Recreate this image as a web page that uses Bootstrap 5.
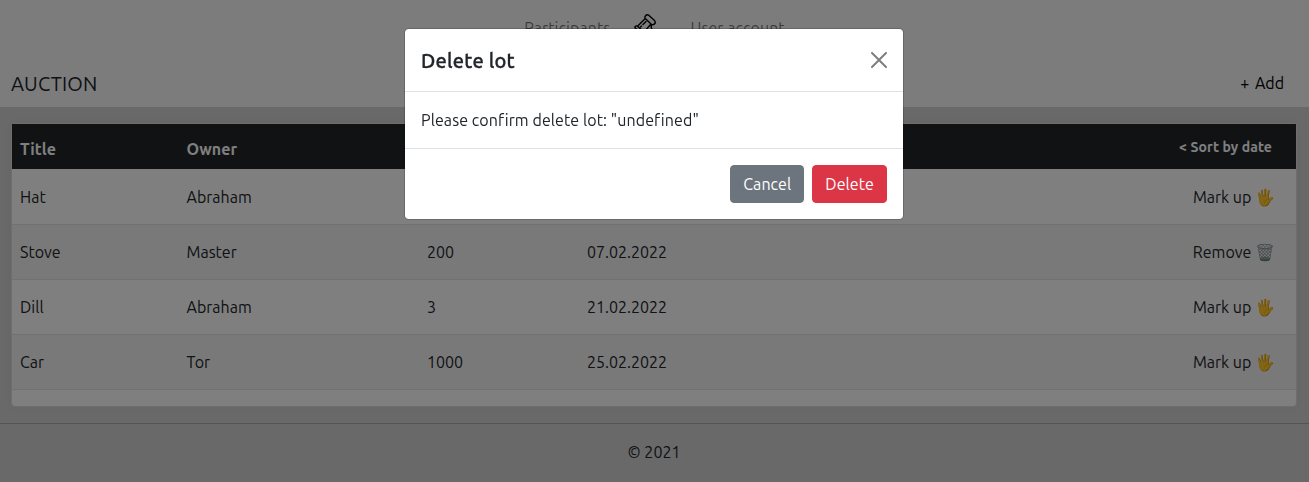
<!DOCTYPE html>
<html lang="en">
<head>
<meta charset="utf-8">
<meta name="viewport" content="width=device-width, initial-scale=1">
<title>Auction</title>
<link href="https://cdn.jsdelivr.net/npm/bootstrap@5.3.0/dist/css/bootstrap.min.css" rel="stylesheet">
<style>
  body { font-family: Ubuntu, "Noto Sans", sans-serif; font-size: 16px; background: #d3d3d3; overflow: hidden; height: 482px; }
  .topbar { height: 107px; background: #f8f9fa; }
  .topnav { height: 56px; }
  .topnav a { color: rgba(0,0,0,.55); text-decoration: none; letter-spacing: .08px; }
  .page-name { font-size: 20px; margin: 0; letter-spacing: .15px; }
  .add-line { padding: 4px 25px 0 11px; }
  .add-lot { padding-bottom: 1px; }
  .plus { font-size: 16px; margin-right: 2px; }
  .stage { padding: 16px 12px 16px 11px; }
  .lots { border: 1px solid #dcdcdc; border-radius: 4px; height: 284px; background: #fff; box-shadow: 0 0 12px rgba(0,0,0,.05); }
  .lots table { table-layout: fixed; }
  .lots td { height: 55px; padding: 0 8px; vertical-align: middle; border-bottom: 1px solid #dee2e6; }
  .lots tbody tr:first-child td { padding-top: 1px; }
  .lots tbody tr:nth-child(even) td { background: #f2f2f2; box-shadow: none; }
  .lots th { height: 45px; padding: 5px 8px 0; vertical-align: middle; background: #212529; color: #fff; border: 0; letter-spacing: .1px; }
  .lots th.sorter { font-size: 14px; padding: 1px 24px 0 0; }
  .lots td:last-child { padding-right: 21px; }
  .trash { filter: grayscale(.75) brightness(.85); }
  .foot { border-top: 1px solid #a9a9a9; height: 59px; padding: 0 1px 2px 0; }
  .modal { padding-right: 1px; letter-spacing: .08px; }
  .modal-title { letter-spacing: .2px; position: relative; top: 1px; -webkit-text-stroke: .3px currentColor; }
  .modal-content { border-radius: 4.8px; }
  .modal-header, .modal-footer { border-color: #dee2e6; }
  .modal .btn { border-radius: 4px; letter-spacing: .08px; }
</style>
</head>
<body>
<header class="topbar d-flex flex-column">
  <nav class="topnav d-flex justify-content-center align-items-center">
    <a href="#">Participants</a>
    <svg class="mx-4" width="32" height="32" viewBox="0 0 32 32" fill="none" stroke="#000" stroke-width="1.4" stroke-linejoin="round" stroke-linecap="round"><path d="M11.500 3.800Q13 1.900 15 3.400L20.800 8.800Q22 10.500 20.300 12.200Q18.500 13.400 17 12L11.300 6.600Q10.200 5.200 11.500 3.800ZM11.300 6.600L3.500 14.200M17 12L10 20M3.500 14.200Q1.300 13.200 .8 15.500L9 24Q11 23 10 20ZM17.300 12.500V16L18.500 18M12 9.500L9 12.500M7.500 14L6.500 15"/></svg>
    <a href="#">User account</a>
  </nav>
  <div class="add-line d-flex justify-content-between align-items-center flex-fill">
    <h1 class="page-name fw-normal">AUCTION</h1>
    <span class="add-lot text-black"><span class="plus">+</span> <span>Add</span></span>
  </div>
</header>
<main class="stage">
  <div class="lots">
    <table class="table mb-0">
      <colgroup><col style="width:166.5px"><col style="width:240.5px"><col style="width:160px"><col><col style="width:240px"></colgroup>
      <thead><tr><th>Title</th><th>Owner</th><th>Price</th><th>Date</th><th class="sorter text-end">&lt; Sort by date</th></tr></thead>
      <tbody>
        <tr><td>Hat</td><td>Abraham</td><td>10</td><td>05.02.2022</td><td class="text-end">Mark up 🖐️</td></tr>
        <tr><td>Stove</td><td>Master</td><td>200</td><td>07.02.2022</td><td class="text-end">Remove <span class="trash d-inline-block">🗑️</span></td></tr>
        <tr><td>Dill</td><td>Abraham</td><td>3</td><td>21.02.2022</td><td class="text-end">Mark up 🖐️</td></tr>
        <tr><td>Car</td><td>Tor</td><td>1000</td><td>25.02.2022</td><td class="text-end">Mark up 🖐️</td></tr>
      </tbody>
    </table>
  </div>
</main>
<footer class="foot d-flex justify-content-center align-items-center">© 2021</footer>
<div class="modal-backdrop show"></div>
<div class="modal show d-block" tabindex="-1">
  <div class="modal-dialog">
    <div class="modal-content">
      <div class="modal-header"><h5 class="modal-title">Delete lot</h5><button type="button" class="btn-close" aria-label="Close"></button></div>
      <div class="modal-body">Please confirm delete lot: "undefined"</div>
      <div class="modal-footer"><button class="btn btn-secondary">Cancel</button><button class="btn btn-danger">Delete</button></div>
    </div>
  </div>
</div>
<script src="https://cdn.jsdelivr.net/npm/bootstrap@5.3.0/dist/js/bootstrap.bundle.min.js"></script>
</body>
</html>
